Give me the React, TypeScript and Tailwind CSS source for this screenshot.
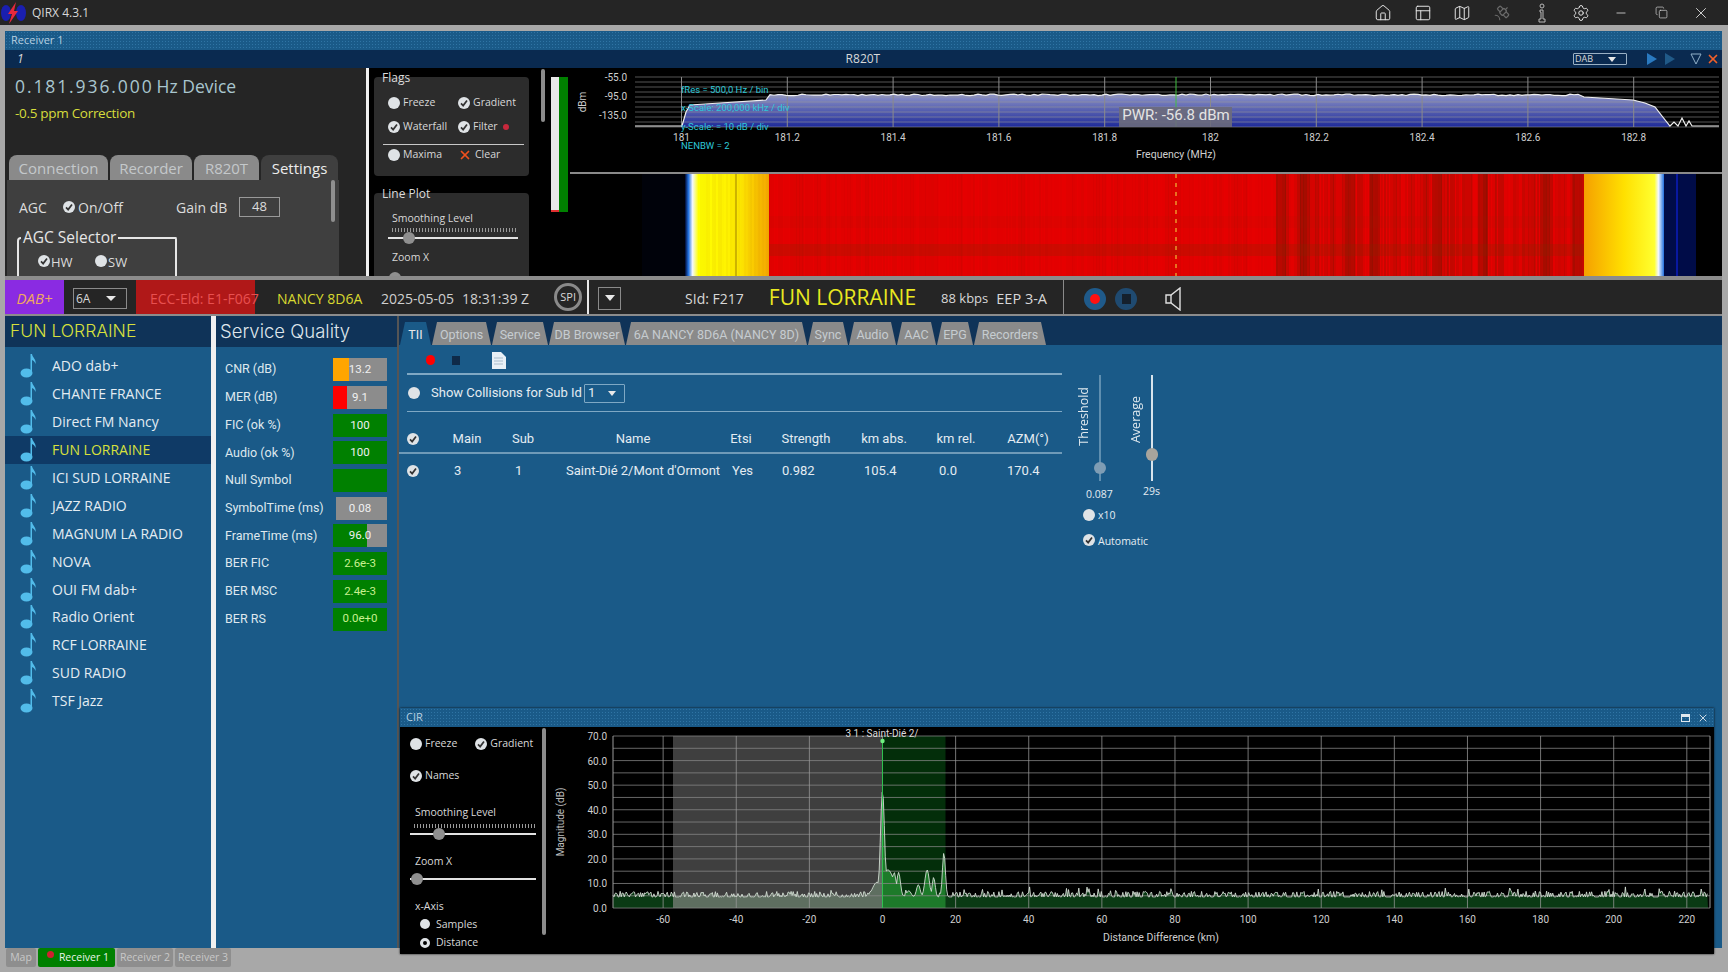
import { Copy, House, Map as MapIcon, Minus, PanelsTopLeft, Satellite, Settings, X } from "lucide-react";

const services = [
  "ADO dab+",
  "CHANTE FRANCE",
  "Direct FM Nancy",
  "FUN LORRAINE",
  "ICI SUD LORRAINE",
  "JAZZ RADIO",
  "MAGNUM LA RADIO",
  "NOVA",
  "OUI FM dab+",
  "Radio Orient",
  "RCF LORRAINE",
  "SUD RADIO",
  "TSF Jazz",
];

const quality = [
  { label: "CNR (dB)", value: "13.2", color: "#ffa500", pct: 30 },
  { label: "MER (dB)", value: "9.1", color: "#ff0000", pct: 26 },
  { label: "FIC (ok %)", value: "100", color: "#008000", pct: 100 },
  { label: "Audio (ok %)", value: "100", color: "#008000", pct: 100 },
  { label: "Null Symbol", value: "", color: "#008000", pct: 100 },
  { label: "SymbolTime (ms)", value: "0.08", color: "#1a5a88", pct: 5 },
  { label: "FrameTime (ms)", value: "96.0", color: "#008000", pct: 63 },
  { label: "BER FIC", value: "2.6e-3", color: "#008000", pct: 100 },
  { label: "BER MSC", value: "2.4e-3", color: "#008000", pct: 100 },
  { label: "BER RS", value: "0.0e+0", color: "#008000", pct: 100 },
];

const tabs = ["Options", "Service", "DB Browser", "6A NANCY 8D6A (NANCY 8D)", "Sync", "Audio", "AAC", "EPG", "Recorders"];
const tabWidths = [58, 55, 75, 180, 39, 46, 38, 35, 71];

// small deterministic noise so the traces stay the same on every render
function makeNoise(seed: number) {
  let s = seed;
  return () => {
    s = (s * 16807) % 2147483647;
    return (s % 10000) / 10000;
  };
}

function Radio({ size = 13 }: { size?: number }) {
  return <span className="inline-block shrink-0 rounded-full bg-[#dfe3e6]" style={{ width: size, height: size }} />;
}

function Check({ size = 13, dark = "#333" }: { size?: number; dark?: string }) {
  return (
    <svg width={size} height={size} viewBox="0 0 14 14" className="shrink-0">
      <circle cx="7" cy="7" r="7" fill="#dfe3e6" />
      <path d="M3.5 7.5 L6 10 L10.5 4" fill="none" stroke={dark} strokeWidth="2" />
    </svg>
  );
}

function Note() {
  return (
    <svg width="17" height="25" viewBox="0 0 17 25" className="shrink-0">
      <ellipse cx="6.5" cy="20" rx="6" ry="4.6" fill="#52bcea" />
      <path d="M10.5 20 V1 H12 C12.5 5 16.5 6 15.5 11 C14.5 8 13 7.5 12 7 V20 Z" fill="#52bcea" />
    </svg>
  );
}

function HSlider({ thumb, ticks = false }: { thumb: number; ticks?: boolean }) {
  return (
    <div className="relative h-[8px] w-full">
      {ticks && (
        <div className="absolute -top-[6px] left-[4px] right-0 h-[4px] bg-[repeating-linear-gradient(90deg,#9a9a9a_0,#9a9a9a_1px,transparent_1px,transparent_3px)]" />
      )}
      <div className="absolute left-0 right-0 top-[3px] h-[2px] bg-[#e2e2e2]" />
      <div className="absolute top-[-2px] h-[12px] w-[12px] rounded-full bg-[#8f8f8f]" style={{ left: thumb }} />
    </div>
  );
}

function TitleBar() {
  const cls = "h-[18px] w-[18px] text-[#e6e6e6]";
  return (
    <div className="flex h-[25px] shrink-0 items-center bg-[#252525] text-[12px] text-[#d8d8d8]">
      <svg width="28" height="22" viewBox="0 0 28 22" className="shrink-0">
        <ellipse cx="6" cy="11" rx="5" ry="8" fill="#1a1fb0" />
        <ellipse cx="21" cy="11" rx="5" ry="8" fill="#1a1fb0" />
        <path d="M16 0 L8 12 H12 L9 22 L18 9 H14 Z" fill="#e8283c" />
      </svg>
      <span className="ml-[4px]">QIRX 4.3.1</span>
      <div className="ml-auto flex items-center">
        <div className="flex w-[40px] justify-center"><House className={cls} strokeWidth={1.3} /></div>
        <div className="flex w-[39px] justify-center"><PanelsTopLeft className={cls} strokeWidth={1.3} /></div>
        <div className="flex w-[40px] justify-center"><MapIcon className={cls} strokeWidth={1.3} /></div>
        <div className="flex w-[40px] justify-center"><Satellite className="h-[18px] w-[18px] text-[#6a6a6a]" strokeWidth={1.5} /></div>
        <div className="flex w-[39px] justify-center">
          <svg width="10" height="20" viewBox="0 0 10 20" fill="none" stroke="#b8b8b8" strokeWidth="1">
            <circle cx="5" cy="3" r="2" />
            <path d="M3 7 H6 V16 H8 V19 H2 V16 H4 V9 H3 Z" />
          </svg>
        </div>
        <div className="flex w-[40px] justify-center"><Settings className={cls} strokeWidth={1.3} /></div>
        <div className="flex w-[40px] justify-center"><Minus className="h-[14px] w-[14px] text-[#d0d0d0]" strokeWidth={1.5} /></div>
        <div className="flex w-[41px] justify-center"><Copy className="h-[15px] w-[13px] text-[#d0d0d0]" strokeWidth={1.3} /></div>
        <div className="flex w-[38px] justify-center"><X className="h-[18px] w-[18px] text-[#e0e0e0]" strokeWidth={1.2} /></div>
        <div className="w-[8px]" />
      </div>
    </div>
  );
}

function DeviceColumn() {
  const tabCls = "flex h-[25px] items-center justify-center rounded-t-[8px] pt-[2px] text-[15px]";
  return (
    <div className="flex h-full w-[361px] shrink-0 flex-col bg-[#252525]">
      <div className="ml-[10px] mt-[7px] h-[22px] whitespace-nowrap text-[17.5px] leading-[22px] text-[#a9c6cf]">
        <span className="tracking-[1.9px]">0.181.936.000</span>
        <span className="ml-[3px]">Hz Device</span>
      </div>
      <div className="ml-[10px] mt-[6px] h-[20px] text-[13.5px] leading-[20px] tracking-[-0.3px] text-[#d6dc3c]">-0.5 ppm Correction</div>
      <div className="ml-[4px] mt-[32px] flex gap-[2px]">
        <div className={`${tabCls} w-[99px] bg-[#8a8a8a] text-[#c4c8ca]`}>Connection</div>
        <div className={`${tabCls} w-[82px] bg-[#8a8a8a] text-[#c4c8ca]`}>Recorder</div>
        <div className={`${tabCls} w-[65px] bg-[#8a8a8a] text-[#c4c8ca]`}>R820T</div>
        <div className={`${tabCls} w-[77px] bg-[#3f3f3f] text-[#ececec]`}>Settings</div>
      </div>
      <div className="ml-[2px] flex w-[332px] flex-1 bg-[#3f3f3f]">
        <div className="flex-1 pl-[10px]">
          <div className="mt-[17px] flex h-[20px] items-center text-[14px] text-[#dcdcdc]">
            <span className="w-[46px] pl-[2px]">AGC</span>
            <Check size={12} />
            <span className="ml-[3px] w-[98px]">On/Off</span>
            <span className="w-[63px]">Gain dB</span>
            <span className="flex h-[20px] w-[41px] items-center justify-center border border-[#9a9a9a] text-[13px]">48</span>
          </div>
          <div className="relative mt-[20px] h-[60px] w-[160px] rounded-tl-[4px] rounded-tr-[2px] border-x-2 border-t-2 border-[#e6e6e6]">
            <span className="absolute -top-[13px] left-[2px] bg-[#3f3f3f] px-[2px] text-[15.5px] leading-[22px] text-[#e6e6e6]">AGC Selector</span>
            <div className="mt-[11px] flex items-center pl-[19px] text-[13px] text-[#dcdcdc]">
              <Check size={12} />
              <span className="ml-[1px] mt-[3px] w-[44px]">HW</span>
              <Radio size={12} />
              <span className="ml-[1px] mt-[3px]">SW</span>
            </div>
          </div>
        </div>
        <div className="mr-[4px] h-[42px] w-[4px] rounded-[2px] bg-[#8f8f8f]" />
      </div>
    </div>
  );
}

function FlagsColumn() {
  const row = "flex h-[15px] items-center gap-[3px] text-[10.5px] text-[#d8d8d8]";
  return (
    <div className="flex h-full w-[201px] shrink-0 overflow-hidden bg-black">
      <div className="ml-[5px] mt-[9px] w-[155px] shrink-0">
        <div className="flow-root h-[99px] rounded-[4px] bg-[#2c2c2c] pl-[14px]">
          <div className="-ml-[6px] -mt-[4px] text-[12px] leading-[10px] text-[#dcdcdc]">Flags</div>
          <div className="mt-[12px] grid grid-cols-[70px_1fr] gap-y-[9px]">
            <div className={row}><Radio size={12} />Freeze</div>
            <div className={row}><Check size={12} />Gradient</div>
            <div className={row}><Check size={12} />Waterfall</div>
            <div className={row}><Check size={12} />Filter<span className="ml-[2px] h-[6px] w-[6px] rounded-full bg-[#c8283c]" /></div>
          </div>
          <div className="ml-[-5px] mt-[10px] mr-[5px] h-px bg-[#c8c8c8]" />
          <div className="mt-[2px] grid grid-cols-[70px_1fr]">
            <div className={row}><Radio size={12} />Maxima</div>
            <div className={row}><X className="h-[14px] w-[14px] text-[#f0501e]" strokeWidth={3} />Clear</div>
          </div>
        </div>
        <div className="mt-[17px] flow-root h-[120px] rounded-[4px] bg-[#2c2c2c] pl-[14px] pr-[11px]">
          <div className="-ml-[6px] -mt-[4px] text-[12px] leading-[10px] text-[#dcdcdc]">Line Plot</div>
          <div className="ml-[4px] mt-[12px] text-[10.5px] leading-[14px] text-[#d8d8d8]">Smoothing Level</div>
          <div className="mt-[9px]"><HSlider thumb={15} ticks /></div>
          <div className="ml-[4px] mt-[8px] text-[10.5px] leading-[14px] text-[#d8d8d8]">Zoom X</div>
          <div className="mt-[10px]"><HSlider thumb={1} /></div>
        </div>
      </div>
      <div className="ml-[12px] mt-[1px] h-[53px] w-[4px] shrink-0 rounded-[2px] bg-[#8c8c8c]" />
      <div className="ml-[6px] mt-[9px] flex h-[135px] w-[18px] shrink-0">
        <div className="flex w-[8px] flex-col justify-end bg-[#e8e8e8]"><div className="h-[2px] bg-[#e03030]" /></div>
        <div className="w-[9px] bg-[#008000]" />
      </div>
      <div className="ml-[2px] h-full w-px shrink-0 bg-[#8a8a8a]" />
    </div>
  );
}

function SpectrumChart() {
  const rnd = makeNoise(77);
  const left = 635;
  const right = 1719;
  const ticks = [181, 181.2, 181.4, 181.6, 181.8, 182, 182.2, 182.4, 182.6, 182.8];
  const xFor = (f: number) => 681.5 + (f - 181) * 529;
  const lines: string[] = [`M${left} 126`, "L682 126", "L686 112", "L690 105", "L720 103", "L766 100"];
  for (let x = 770; x < 1580; x += 4) lines.push(`L${x} ${94 + rnd() * 1.6}`);
  lines.push("L1584 97", "L1633 100", "L1645 103", "L1655 107", "L1662 116", "L1670 126");
  const top = lines.slice(1).join(" ");
  return (
    <svg width="1152" height="104" viewBox="570 68 1152 104" className="block" fontFamily="Roboto, sans-serif">
      <defs>
        <linearGradient id="specFill" x1="0" y1="0" x2="0" y2="1">
          <stop offset="0" stopColor="#8e94c8" />
          <stop offset="1" stopColor="#1e2a98" />
        </linearGradient>
      </defs>
      <path d={`M682 126 ${top} V127 H682 Z`} fill="url(#specFill)" />
      {Array.from({ length: 11 }, (_, i) => (
        <line key={i} x1={left} x2={right} y1={77 + i * 5} y2={77 + i * 5} stroke="#9a9a9a" strokeOpacity={0.55} />
      ))}
      {ticks.map((t) => (
        <g key={t}>
          <line x1={xFor(t)} x2={xFor(t)} y1={77} y2={127} stroke="#8a8a8a" />
          <text x={xFor(t)} y={141} textAnchor="middle" fontSize="10" fill="#cfcfcf">{t}</text>
        </g>
      ))}
      <path d={`M${left} 126 ${top} L1674 122 L1678 126 L1682 118 L1686 126 L1689 121 L1692 126 H${right}`} fill="none" stroke="#f0f0f0" strokeWidth="1.2" />
      <line x1="1176" x2="1176" y1="77" y2="127" stroke="#40c040" />
      <rect x="1119" y="107" width="113" height="20" fill="#6c6c7c" fillOpacity="0.9" />
      <text x="1176" y="120" textAnchor="middle" fontSize="15" fill="#e4e4e4">PWR: -56.8 dBm</text>
      <text x="627" y="81" textAnchor="end" fontSize="10" fill="#cfcfcf">-55.0</text>
      <text x="627" y="100" textAnchor="end" fontSize="10" fill="#cfcfcf">-95.0</text>
      <text x="627" y="119" textAnchor="end" fontSize="10" fill="#cfcfcf">-135.0</text>
      <text x="0" y="0" fontSize="10" fill="#cfcfcf" textAnchor="middle" transform="translate(586 102) rotate(-90)">dBm</text>
      <text x="1176" y="158" textAnchor="middle" fontSize="10.5" fill="#cfcfcf">Frequency (MHz)</text>
      <g fontSize="9.5" fill="#2ec8d8">
        <text x="681" y="93">fRes = 500,0 Hz / bin</text>
        <text x="681" y="111">x-Scale: 200,000 kHz / div</text>
        <text x="681" y="130">y-Scale: = 10 dB / div</text>
        <text x="681" y="149">NENBW = 2</text>
      </g>
    </svg>
  );
}

function Waterfall() {
  const rnd = makeNoise(4242);
  const bands: { x: number; w: number; o: number }[] = [];
  for (let x = 769; x < 1584; x += 3) {
    const weight = x > 1270 ? 0.26 : 0.07;
    bands.push({ x, w: 2 + Math.floor(rnd() * 3), o: rnd() * weight });
  }
  const clusters = [1276, 1300, 1345, 1370, 1432, 1478, 1540, 1572];
  const yellows: { x: number; o: number }[] = [];
  for (let x = 700; x < 769; x += 2) yellows.push({ x, o: rnd() * 0.08 });
  return (
    <svg width="1152" height="102" viewBox="570 174 1152 102" className="block">
      <defs>
        <linearGradient id="wfLeft" x1="0" y1="0" x2="1" y2="0">
          <stop offset="0" stopColor="#000830" />
          <stop offset="0.04" stopColor="#2070e0" />
          <stop offset="0.09" stopColor="#f4f8ff" />
          <stop offset="0.16" stopColor="#ffff00" />
          <stop offset="0.62" stopColor="#fff000" />
          <stop offset="1" stopColor="#f5a800" />
        </linearGradient>
        <linearGradient id="wfRight" x1="0" y1="0" x2="1" y2="0">
          <stop offset="0" stopColor="#f5a000" />
          <stop offset="0.5" stopColor="#ffe000" />
          <stop offset="0.88" stopColor="#ffff30" />
          <stop offset="0.93" stopColor="#f4f8ff" />
          <stop offset="1" stopColor="#2070e0" />
        </linearGradient>
      </defs>
      <rect x="570" y="174" width="1152" height="102" fill="#000" />
      <rect x="642" y="174" width="48" height="102" fill="#00020a" />
      <rect x="685" y="174" width="84" height="102" fill="url(#wfLeft)" />
      {yellows.map((b) => (
        <rect key={b.x} x={b.x} y="174" width="2" height="102" fill="#b06000" fillOpacity={b.o} />
      ))}
      <line x1="736" x2="736" y1="174" y2="276" stroke="#a08000" />
      <rect x="769" y="174" width="815" height="102" fill="#e60000" />
      <g className="blur-[0.7px]">
        {bands.map((b) => (
          <rect key={b.x} x={b.x} y="174" width={b.w} height="102" fill="#5a1c00" fillOpacity={b.o} />
        ))}
        {clusters.map((x) => (
          <rect key={x} x={x} y="174" width="10" height="102" fill="#5a1c00" fillOpacity="0.3" />
        ))}
        <rect x="769" y="216" width="815" height="12" fill="#8a2000" fillOpacity="0.08" />
        <rect x="769" y="244" width="815" height="12" fill="#7a2c00" fillOpacity="0.22" />
      </g>
      <rect x="1584" y="174" width="80" height="102" fill="url(#wfRight)" />
      <rect x="1664" y="174" width="32" height="102" fill="#000c48" />
      <rect x="1676" y="174" width="2" height="102" fill="#0818a0" />
      <line x1="1176" x2="1176" y1="174" y2="276" stroke="#f0e040" strokeDasharray="4 5" />
    </svg>
  );
}

function StatusBar() {
  return (
    <div className="flex h-[34px] shrink-0 items-center bg-[#252525] text-[14px]">
      <div className="flex h-full w-[59px] items-center justify-center bg-[#8a2be2] pt-[2px] text-[15px] italic text-[#f0a860]">DAB+</div>
      <div className="ml-[9px] mt-[3px] flex h-[21px] w-[54px] items-center justify-between border border-[#8a8a8a] pl-[2px] pr-[10px] text-[12px] text-[#d8d8d8]">
        6A<span className="h-0 w-0 border-x-[5px] border-t-[5px] border-x-transparent border-t-[#e8e8e8]" />
      </div>
      <div className="ml-[9px] flex h-full w-[119px] items-center whitespace-nowrap bg-[#b01818] pl-[14px] pt-[3px] text-[#e85050]">ECC-Eld: E1-F067</div>
      <span className="ml-[22px] mt-[3px] w-[104px] text-[#d8d830]">NANCY 8D6A</span>
      <span className="mt-[3px] text-[#cfcfcf]">2025-05-05</span>
      <span className="ml-[8px] mt-[3px] text-[#cfcfcf]">18:31:39 Z</span>
      <div className="ml-[25px] flex h-[28px] w-[28px] items-center justify-center rounded-full border-[3px] border-[#8a8a8a] text-[11px] text-[#d8d8d8]">SPI</div>
      <div className="ml-[5px] h-full w-[2px] bg-[#e8e8e8]" />
      <div className="ml-[9px] mt-[2px] flex h-[23px] w-[23px] items-center justify-center border border-[#8a8a8a]">
        <span className="h-0 w-0 border-x-[5px] border-t-[6px] border-x-transparent border-t-[#e8e8e8]" />
      </div>
      <span className="ml-[64px] mt-[3px] text-[#d8d8d8]">SId: F217</span>
      <span className="ml-[25px] mt-[1px] text-[21px] text-[#e8e820]">FUN LORRAINE</span>
      <span className="ml-[25px] mt-[3px] text-[13px] text-[#d8d8d8]">88 kbps</span>
      <span className="ml-[8px] mt-[3px] text-[14.5px] text-[#d8d8d8]">EEP 3-A</span>
      <div className="ml-[16px] h-full w-px bg-[#8a8a8a]" />
      <div className="ml-[20px] mt-[3px] flex h-[22px] w-[22px] items-center justify-center rounded-full bg-[#1f5a8a]">
        <span className="h-[10px] w-[10px] rounded-full bg-[#ff1010]" />
      </div>
      <div className="ml-[9px] mt-[3px] flex h-[22px] w-[22px] items-center justify-center rounded-full bg-[#1f4a70]">
        <span className="h-[10px] w-[9px] bg-[#15202c]" />
      </div>
      <svg width="16" height="24" viewBox="0 0 16 24" className="ml-[28px] mt-[3px]" fill="none" stroke="#e0e0e0" strokeWidth="1.4">
        <path d="M1 8 H6 L15 1 V23 L6 16 H1 Z" />
        <path d="M6 8 V16" />
      </svg>
    </div>
  );
}

function ServiceList() {
  return (
    <div className="flex w-[206px] shrink-0 flex-col bg-[#1a5a88]">
      <div className="flex h-[31px] items-center whitespace-nowrap bg-[#0f3358] pl-[5px] font-['Inter'] text-[17.5px] font-light text-[#d8e03c]">FUN LORRAINE</div>
      <div className="mt-[5px] flex flex-col">
        {services.map((s) => (
          <div key={s} className={`flex h-[27.9px] items-center pl-[15px] text-[14px] ${s === "FUN LORRAINE" ? "bg-[#0f3a66] text-[#d8e03c]" : "text-[#e4ecf2]"}`}>
            <Note />
            <span className="ml-[15px]">{s}</span>
          </div>
        ))}
      </div>
    </div>
  );
}

function QualityPanel() {
  return (
    <div className="flex w-[181px] shrink-0 flex-col bg-[#1a5a88]">
      <div className="flex h-[31px] items-center whitespace-nowrap bg-[#0f3358] pl-[4px] font-['Inter'] text-[18.5px] font-light text-[#dfe6ec]">Service Quality</div>
      <div className="mt-[9px] flex flex-col">
        {quality.map((q) => (
          <div key={q.label} className="flex h-[27.7px] items-center pl-[9px] font-['Roboto'] text-[12.5px] text-[#dfe8ee]">
            <span className="w-[108px] whitespace-nowrap">{q.label}</span>
            <div className="relative flex h-[23px] w-[54px] items-center justify-center bg-[#8c8c8c] text-[11.5px]">
              <div className="absolute inset-y-0 left-0" style={{ width: `${q.pct}%`, backgroundColor: q.color }} />
              <span className={`relative ${q.label.startsWith("BER") ? "text-[#c8f090]" : "text-[#f0f0f0]"}`}>{q.value}</span>
            </div>
          </div>
        ))}
      </div>
    </div>
  );
}

function TiiTabs() {
  const trap = "[clip-path:polygon(5px_0,calc(100%-5px)_0,100%_100%,0_100%)]";
  return (
    <div className="flex h-[29px] shrink-0 items-end bg-[#0f3358] pl-[1px] font-['Roboto']">
      <div className={`flex h-[23px] w-[31px] items-center justify-center bg-[#1a5a88] pt-[4px] text-[12.5px] text-[#e8e8e8] ${trap}`}>TII</div>
      <div className="flex">
        {tabs.map((t, i) => (
          <div
            key={t}
            className={`ml-[1px] flex h-[23px] items-center justify-center whitespace-nowrap bg-[#8a8a8a] pt-[4px] text-[12.5px] text-[#c6ccd0] ${trap}`}
            style={{ width: tabWidths[i] + 1 }}
          >
            {t}
          </div>
        ))}
      </div>
    </div>
  );
}

function TiiTable() {
  const headCols = "grid-cols-[28px_80px_32px_188px_28px_102px_54px_90px_54px]";
  const rowCols = "grid-cols-[55px_61px_51px_166px_50px_82px_75px_68px_40px]";
  return (
    <div className="w-[663px] shrink-0 font-['Roboto'] text-[13px] text-[#e4ecf2]">
      <div className="flex h-[28px] items-center pl-[27px] pt-[2px]">
        <span className="h-[10px] w-[9px] rounded-full bg-[#ff0000]" />
        <span className="ml-[17px] h-[9px] w-[8px] bg-[#0f2a48]" />
        <svg width="14" height="17" viewBox="0 0 14 17" className="ml-[32px]">
          <path d="M0 0 H9 L14 5 V17 H0 Z" fill="#e8f0f6" />
          <path d="M2 6 H11 M2 9 H11 M2 12 H11" stroke="#a8bccc" />
        </svg>
      </div>
      <div className="ml-[8px] h-[2px] bg-[#7fa8c4]" />
      <div className="flex h-[36px] items-center pl-[9px]">
        <Radio size={12} />
        <span className="ml-[11px] w-[153px] whitespace-nowrap">Show Collisions for Sub Id</span>
        <div className="flex h-[19px] w-[41px] items-center justify-between rounded-[1px] border border-[#7fa8c4] pl-[3px] pr-[8px]">
          1<span className="h-0 w-0 border-x-[4px] border-t-[5px] border-x-transparent border-t-[#e8e8e8]" />
        </div>
      </div>
      <div className="ml-[8px] h-px bg-[#7fa8c4]" />
      <div className={`mt-[16px] grid h-[22px] items-center text-center ${headCols}`}>
        <div className="flex justify-center"><Check size={12} /></div>
        <span>Main</span>
        <span>Sub</span>
        <span>Name</span>
        <span>Etsi</span>
        <span>Strength</span>
        <span>km abs.</span>
        <span>km rel.</span>
        <span className="whitespace-nowrap">AZM(°)</span>
      </div>
      <div className="mt-[2px] h-[2px] bg-[#6f9ab8]" />
      <div className={`mt-[7px] grid h-[20px] items-center whitespace-nowrap ${rowCols}`}>
        <div className="pl-[8px]"><Check size={12} /></div>
        <span>3</span>
        <span>1</span>
        <span>Saint-Dié 2/Mont d'Ormont</span>
        <span>Yes</span>
        <span>0.982</span>
        <span>105.4</span>
        <span>0.0</span>
        <span>170.4</span>
      </div>
    </div>
  );
}

function SliderColumn() {
  const label = "[writing-mode:vertical-rl] rotate-180 text-[12.5px] text-[#dfe8ee]";
  return (
    <div className="ml-[13px] mt-[30px] text-[10.5px] text-[#e4ecf2]">
      <div className="flex">
        <div className="w-[52px]">
          <div className="flex h-[106px]">
            <div className="flex w-[18px] items-end pb-[35px]"><span className={label}>Threshold</span></div>
            <div className="relative ml-[6px] h-full w-[2px] bg-[#5f8fb0]">
              <span className="absolute left-[-5px] top-[87px] h-[12px] w-[12px] rounded-full bg-[#7f9db4]" />
            </div>
          </div>
          <div className="ml-[11px] mt-[6px]">0.087</div>
        </div>
        <div className="w-[52px]">
          <div className="flex h-[106px]">
            <div className="flex w-[18px] items-end pb-[38px]"><span className={label}>Average</span></div>
            <div className="relative ml-[6px] h-full w-[2px] bg-[#d8e4ec]">
              <span className="absolute left-[-5px] top-[73px] h-[13px] w-[12px] rounded-full bg-[#a8a49c]" />
            </div>
          </div>
          <div className="ml-[16px] mt-[3px]">29s</div>
        </div>
      </div>
      <div className="ml-[8px] mt-[3px] flex items-center gap-[3px]"><Radio size={12} /><span className="mt-[2px]">x10</span></div>
      <div className="ml-[8px] mt-[8px] flex items-center gap-[3px]"><Check size={12} /><span className="mt-[2px]">Automatic</span></div>
    </div>
  );
}

function CirChart() {
  const rnd = makeNoise(991);
  const xFor = (k: number) => 882.5 + k * 3.656;
  const yFor = (db: number) => 908 - db * 2.457;
  const peaks = [
    { at: 0, h: 43, w: 0.55 },
    { at: 1.5, h: 11, w: 1.6 },
    { at: 3.2, h: 10, w: 0.5 },
    { at: 4.4, h: 10, w: 0.5 },
    { at: 7.2, h: 2.5, w: 0.6 },
    { at: 9.8, h: 5, w: 0.5 },
    { at: 12.2, h: 11, w: 0.6 },
    { at: 14, h: 8, w: 0.4 },
    { at: 16.8, h: 18, w: 0.4 },
    { at: -1.5, h: 6, w: 1.2 },
  ];
  const pts: string[] = [];
  const minK = (613 - 882.5) / 3.656;
  const maxK = (1708 - 882.5) / 3.656;
  for (let k = minK; k <= maxK; k += 0.28) {
    let db = 4.8 + (rnd() - 0.5) * 4 + (rnd() > 0.94 ? 1.8 : 0);
    for (const p of peaks) db = Math.max(db, p.h * Math.exp(-((k - p.at) * (k - p.at)) / (2 * p.w * p.w)) + 4.5);
    pts.push(`${xFor(k).toFixed(1)},${yFor(db).toFixed(1)}`);
  }
  const trace = `M${pts.join(" L")}`;
  const fill = `${trace} L1708,908 L613,908 Z`;
  const yTicks = [0, 10, 20, 30, 40, 50, 60, 70];
  const xTicks = [-60, -40, -20, 0, 20, 40, 60, 80, 100, 120, 140, 160, 180, 200, 220];
  return (
    <svg width="1168" height="227" viewBox="546 727 1168 227" className="block" fontFamily="Roboto, sans-serif">
      <defs>
        <clipPath id="underTrace"><path d={fill} /></clipPath>
      </defs>
      <rect x="673" y="736" width="209.5" height="172" fill="#3f3f3f" />
      <rect x="882.5" y="736" width="63" height="172" fill="#032e0a" />
      <g clipPath="url(#underTrace)">
        <rect x="613" y="736" width="1097" height="172" fill="#0a3a14" />
        <rect x="673" y="736" width="209.5" height="172" fill="#5e6e60" />
        <rect x="882.5" y="736" width="63" height="172" fill="#1d7a2a" />
      </g>
      {Array.from({ length: 15 }, (_, i) => (
        <line key={i} x1="613" x2="1710" y1={736 + i * 12.29} y2={736 + i * 12.29} stroke="#8a8a8a" strokeOpacity="0.75" />
      ))}
      {xTicks.map((t) => (
        <g key={t}>
          <line x1={xFor(t)} x2={xFor(t)} y1="736" y2="908" stroke="#9a9a9a" strokeOpacity="0.75" />
          <text x={xFor(t)} y="923" textAnchor="middle" fontSize="10" fill="#cfcfcf">{t}</text>
        </g>
      ))}
      <line x1="613" x2="613" y1="736" y2="908" stroke="#9a9a9a" />
      <line x1="1710" x2="1710" y1="736" y2="908" stroke="#9a9a9a" />
      {yTicks.map((t) => (
        <text key={t} x="607" y={yFor(t) + 4} textAnchor="end" fontSize="10" fill="#cfcfcf">{t.toFixed(1)}</text>
      ))}
      <path d={trace} fill="none" stroke="#d4dcd4" strokeWidth="0.9" />
      <line x1="882.5" x2="882.5" y1="741" y2="908" stroke="#30c050" />
      <circle cx="882.5" cy="741" r="2.2" fill="#70f080" />
      <text x="882" y="737" textAnchor="middle" fontSize="10" fill="#dcdcdc">3 1 : Saint-Dié 2/</text>
      <text x="0" y="0" textAnchor="middle" fontSize="10" fill="#bcbcbc" transform="translate(564 822) rotate(-90)">Magnitude (dB)</text>
      <text x="1161" y="941" textAnchor="middle" fontSize="10.5" fill="#cfcfcf">Distance Difference (km)</text>
    </svg>
  );
}

function CirPanel() {
  const row = "flex items-center gap-[3px] text-[10.5px] text-[#d8d8d8]";
  return (
    <div className="absolute left-[1px] top-[392px] flex h-[246px] w-[1314px] flex-col bg-black shadow-[0_0_2px_#111]">
      <div className="flex h-[19px] shrink-0 items-center bg-[#1a5a88] bg-[radial-gradient(circle,#2f74a4_0.7px,transparent_0.8px)] bg-[length:3px_3px] pl-[6px] pr-[5px] text-[11px] text-[#b8d0e0]">
        <span>CIR</span>
        <svg width="10" height="10" viewBox="0 0 10 10" className="ml-auto" fill="none" stroke="#dfe8ee">
          <rect x="0.5" y="1.5" width="8" height="7" />
          <path d="M0.5 3 H8.5" strokeWidth="2" />
        </svg>
        <X className="ml-[6px] h-[12px] w-[12px] text-[#dfe8ee]" strokeWidth={1.8} />
      </div>
      <div className="flex flex-1">
        <div className="w-[142px] shrink-0 pl-[10px]">
          <div className="mt-[9px] flex gap-[18px]">
            <div className={row}><Radio size={12} />Freeze</div>
            <div className={row}><Check size={12} />Gradient</div>
          </div>
          <div className={`mt-[16px] ${row}`}><Check size={12} />Names</div>
          <div className="ml-[5px] mt-[21px] text-[10.5px] leading-[14px] text-[#d8d8d8]">Smoothing Level</div>
          <div className="mr-[6px] mt-[11px]"><HSlider thumb={23} ticks /></div>
          <div className="ml-[5px] mt-[16px] text-[10.5px] leading-[14px] text-[#d8d8d8]">Zoom X</div>
          <div className="mr-[6px] mt-[7px]"><HSlider thumb={1} /></div>
          <div className="ml-[5px] mt-[16px] text-[10.5px] leading-[14px] text-[#d8d8d8]">x-Axis</div>
          <div className={`ml-[10px] mt-[4px] ${row}`}><Radio size={10} /><span className="ml-[3px]">Samples</span></div>
          <div className={`ml-[10px] mt-[3px] ${row}`}>
            <span className="h-[10px] w-[10px] rounded-full border-[3px] border-[#dfe3e6]" />
            <span className="ml-[3px]">Distance</span>
          </div>
        </div>
        <div className="mt-[1px] h-[207px] w-[4px] shrink-0 rounded-[2px] bg-[#8c8c8c]" />
        <CirChart />
      </div>
    </div>
  );
}

export default function App() {
  return (
    <div className="flex h-[972px] w-[1728px] flex-col overflow-hidden bg-[#a8a8a8] font-['Open_Sans',sans-serif]">
      <TitleBar />
      <div className="h-[6px] shrink-0" />
      <div className="ml-[5px] flex h-[936px] w-[1717px] shrink-0 flex-col">
        <div className="flex h-[19px] shrink-0 items-center bg-[#1a5a88] bg-[radial-gradient(circle,#2f74a4_0.7px,transparent_0.8px)] bg-[length:3px_3px] pl-[6px] text-[11px] text-[#b8d0e0]">
          Receiver 1
        </div>
        <div className="flex h-[18px] shrink-0 items-center bg-[#0a2a50] pl-[12px] pr-[2px] text-[12px] text-[#d8d8d8]">
          <span className="italic">1</span>
          <span className="ml-[822px]">R820T</span>
          <div className="ml-auto flex h-[12px] w-[54px] shrink-0 items-center justify-between rounded-[1px] border border-[#9ab0c4] pl-[1px] pr-[10px] text-[9px]">
            DAB<span className="h-0 w-0 border-x-[4px] border-t-[5px] border-x-transparent border-t-[#e8e8e8]" />
          </div>
          <span className="ml-[20px] h-0 w-0 shrink-0 border-y-[6px] border-l-[10px] border-y-transparent border-l-[#2a7ac0]" />
          <span className="ml-[8px] h-0 w-0 shrink-0 border-y-[6px] border-l-[10px] border-y-transparent border-l-[#205a88]" />
          <svg width="12" height="12" viewBox="0 0 12 12" className="ml-[15px] shrink-0" fill="none" stroke="#90b0c8">
            <path d="M1 1 H11 L6 11 Z" />
          </svg>
          <X className="ml-[4px] h-[14px] w-[14px] shrink-0 text-[#f0602a]" strokeWidth={3} />
        </div>
        <div className="flex h-[208px] shrink-0 overflow-hidden bg-black">
          <DeviceColumn />
          <div className="w-[3px] shrink-0 bg-[#f0f0f0]" />
          <FlagsColumn />
          <div className="flex flex-col">
            <SpectrumChart />
            <div className="h-[2px] bg-[#8a8a8a]" />
            <Waterfall />
          </div>
        </div>
        <div className="h-[4px] shrink-0 bg-[#8c8c8c]" />
        <StatusBar />
        <div className="h-[2px] shrink-0 bg-[#8c8c8c]" />
        <div className="flex h-[632px] shrink-0">
          <ServiceList />
          <div className="w-[5px] shrink-0 bg-[#f0f0f0]" />
          <QualityPanel />
          <div className="w-[2px] shrink-0 bg-[#555]" />
          <div className="relative flex min-w-0 flex-1 flex-col bg-[#1a5a88]">
            <TiiTabs />
            <div className="flex">
              <TiiTable />
              <SliderColumn />
            </div>
            <CirPanel />
          </div>
        </div>
        <div className="flex h-[19px] shrink-0 gap-[2px] pl-[1px] text-[10.5px] text-[#c8c8c8]">
          <div className="flex w-[30px] items-center justify-center rounded-[2px] bg-[#8e8e8e]">Map</div>
          <div className="relative flex w-[77px] items-center justify-end rounded-[2px] bg-[#008000] pr-[6px] text-[#e8f4e8]">
            <span className="absolute left-[9px] top-[3px] h-[7px] w-[7px] rounded-full bg-[#d02030]" />
            Receiver 1
          </div>
          <div className="flex w-[56px] items-center justify-center rounded-[2px] bg-[#8e8e8e]">Receiver 2</div>
          <div className="flex w-[56px] items-center justify-center rounded-[2px] bg-[#8e8e8e]">Receiver 3</div>
        </div>
      </div>
    </div>
  );
}
